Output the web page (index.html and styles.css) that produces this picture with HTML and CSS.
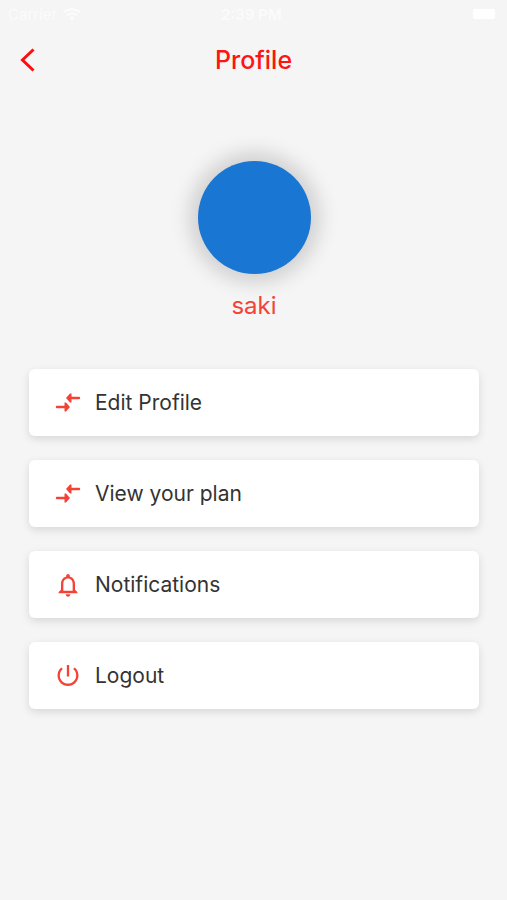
FILE: index.html
```html
<!DOCTYPE html>
<html lang="en">

<head>
  <meta charset="UTF-8">
  <meta name="viewport" content="width=device-width, initial-scale=1.0">
  <title>Profile</title>
  <link rel="stylesheet" href="styles.css">
</head>

<body>

  <div class="status-bar">
    <div class="carrier">
      <span>Carrier</span>
      <svg class="wifi" viewBox="0 0 18 13" aria-hidden="true">
        <path d="M1 4.500a11.500 11.500 0 0 1 16 0M4 7.500a7.200 7.200 0 0 1 10 0" />
        <path class="dot" d="M9 12.500 6.300 9.800a3.900 3.900 0 0 1 5.400 0z" />
      </svg>
    </div>
    <span class="time">2:39 PM</span>
    <div class="battery"></div>
  </div>

  <header class="header">
    <button class="back-btn" aria-label="Back">
      <svg viewBox="0 0 16 24" aria-hidden="true">
        <path d="M13.500 1.500 2.500 12l11 10.500" />
      </svg>
    </button>
    <h1>Profile</h1>
  </header>

  <main>
    <div class="avatar"></div>
    <h2 class="username">saki</h2>

    <nav class="menu">
      <button class="menu-item">
        <svg viewBox="0 0 28 28" aria-hidden="true">
          <path d="M3 16.800h7.500v-3.300h1.500L16 18l-4 4.500h-1.500v-3.300H3a1.200 1.200 0 0 1 0-2.400zM25 10.200h-7.500v3.300H16L12 9l4-4.500h1.500v3.300H25a1.200 1.200 0 0 1 0 2.400z" />
        </svg>
        <span>Edit Profile</span>
      </button>
      <button class="menu-item">
        <svg viewBox="0 0 28 28" aria-hidden="true">
          <path d="M3 16.800h7.500v-3.300h1.500L16 18l-4 4.500h-1.500v-3.300H3a1.200 1.200 0 0 1 0-2.400zM25 10.200h-7.500v3.300H16L12 9l4-4.500h1.500v3.300H25a1.200 1.200 0 0 1 0 2.400z" />
        </svg>
        <span>View your plan</span>
      </button>
      <button class="menu-item">
        <svg viewBox="0 0 24 24" aria-hidden="true">
          <path d="M12 22c1.100 0 2-.9 2-2h-4c0 1.100.9 2 2 2zm6-6v-5c0-3.070-1.630-5.640-4.500-6.320V4c0-.83-.67-1.500-1.500-1.500s-1.500.67-1.500 1.500v.68C7.640 5.360 6 7.920 6 11v5l-2 2v1h16v-1l-2-2zm-2 1H8v-6c0-2.480 1.510-4.500 4-4.500s4 2.020 4 4.500v6z" />
        </svg>
        <span>Notifications</span>
      </button>
      <button class="menu-item">
        <svg viewBox="0 0 24 24" aria-hidden="true">
          <path d="M13 2.500h-2v10h2v-10zm4.830 2.170-1.420 1.420A6.920 6.920 0 0 1 19 11.500c0 3.870-3.130 7-7 7s-7-3.130-7-7c0-2.190 1.010-4.140 2.580-5.420L6.170 4.670A8.932 8.932 0 0 0 3 11.500c0 4.970 4.030 9 9 9s9-4.030 9-9c0-2.740-1.230-5.180-3.170-6.830z" />
        </svg>
        <span>Logout</span>
      </button>
    </nav>
  </main>

</body>

</html>
```
FILE: styles.css
```css
* {
  box-sizing: border-box;
}

body {
  margin: 0;
  min-height: 100vh;
  background: #f5f5f5;
  font-family: Inter, "Liberation Sans", sans-serif;
}

button {
  padding: 0;
  border: none;
  background: none;
  font-family: inherit;
  cursor: pointer;
}

.status-bar {
  display: grid;
  grid-template-columns: 1fr auto 1fr;
  align-items: center;
  height: 28px;
  padding: 0 12px 0 8px;
  color: #fbfbfb;
  font-size: 15px;
}

.carrier {
  display: flex;
  align-items: center;
  gap: 6px;
}

.wifi {
  width: 18px;
  height: 13px;
  fill: none;
  stroke: #fcfcfc;
  stroke-width: 2;
}

.wifi .dot {
  fill: #fcfcfc;
  stroke: none;
}

.time {
  font-weight: 600;
}

.battery {
  justify-self: end;
  width: 22px;
  height: 10px;
  border-radius: 2px;
  background: #fff;
}

.header {
  display: grid;
  grid-template-columns: 1fr auto 1fr;
  align-items: center;
  height: 64px;
  padding: 0 20px;
}

.back-btn {
  justify-self: start;
  height: 24px;
}

.back-btn svg {
  display: block;
  width: 16px;
  height: 24px;
  fill: none;
  stroke: #ff0d0d;
  stroke-width: 3;
}

h1 {
  margin: 0;
  color: #ff1414;
  font-size: 25px;
  font-weight: 500;
  line-height: 32px;
}

main {
  padding: 69px 28px 24px 29px;
}

.avatar {
  width: 113px;
  height: 113px;
  margin: 0 auto;
  border-radius: 50%;
  background: #1976d2;
  box-shadow: 0 0 20px 8px rgba(0, 0, 0, 0.16);
}

.username {
  margin: 16px 0 47px;
  color: #f44336;
  font-size: 24px;
  font-weight: 400;
  line-height: 32px;
  text-align: center;
}

.menu {
  display: flex;
  flex-direction: column;
  gap: 24px;
}

.menu-item {
  display: flex;
  align-items: center;
  gap: 13px;
  width: 100%;
  height: 67px;
  padding: 0 25px;
  border-radius: 6px;
  background: #fff;
  box-shadow: 0 3px 8px rgba(0, 0, 0, 0.12);
  color: #333;
  font-size: 21px;
  line-height: 24px;
}

.menu-item svg {
  width: 28px;
  height: 28px;
  fill: #f44336;
}
```
